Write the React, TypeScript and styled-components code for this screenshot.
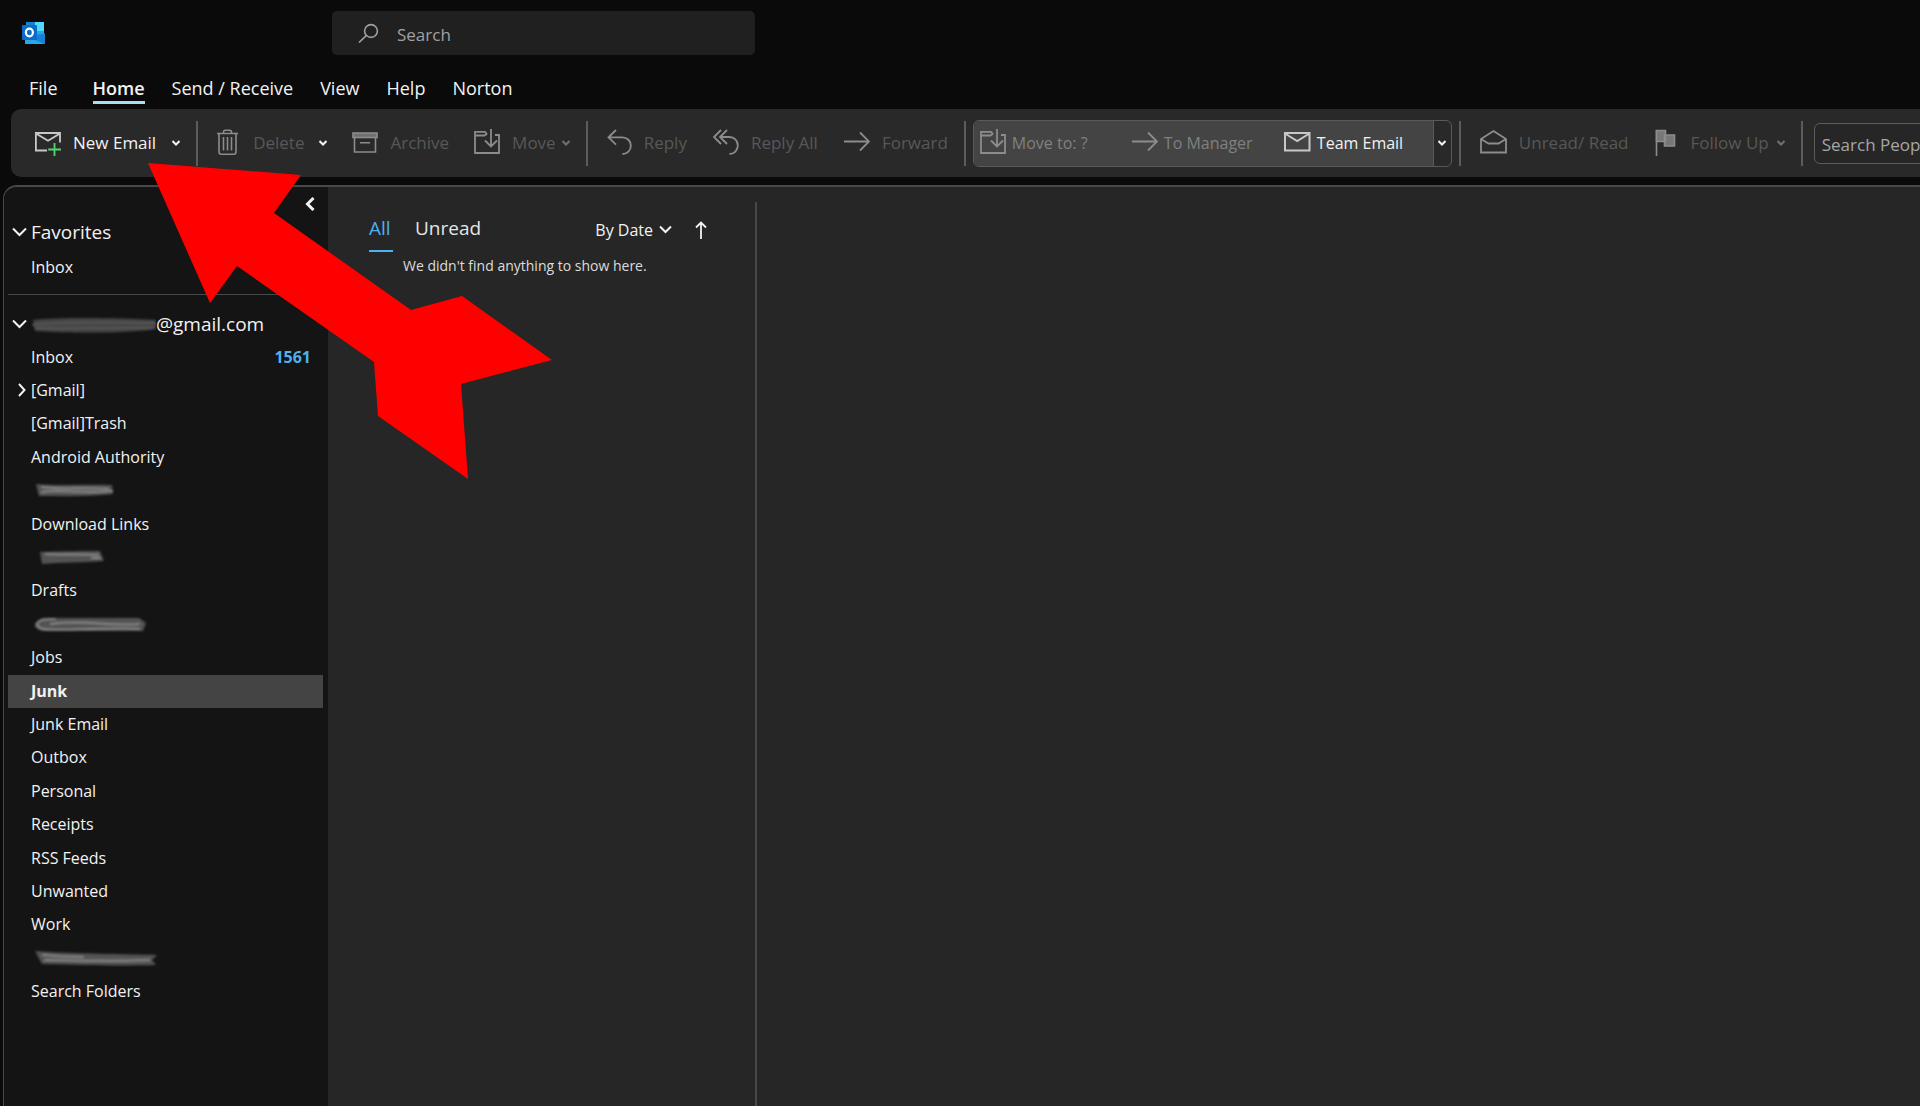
import React from "react";
import styled, { createGlobalStyle } from "styled-components";

const GlobalStyle = createGlobalStyle`
  *, *::before, *::after { box-sizing: border-box; }
  body {
    margin: 0;
    background: #0a0a0a;
    color: #f2f2f2;
    font-family: "Open Sans", "Noto Sans", sans-serif;
    font-size: 16px;
  }
  button, input { font: inherit; color: inherit; }
  button { background: none; border: 0; padding: 0; cursor: pointer; white-space: nowrap; }
  a { color: inherit; text-decoration: none; }
  svg { display: block; flex: none; }
`;

const Page = styled.div`
  position: relative;
  display: flex;
  flex-direction: column;
  min-height: 100vh;
  overflow: hidden;
`;

/* ---------- Title bar ---------- */

const TitleBar = styled.header`
  display: flex;
  align-items: center;
  padding: 11px 22px 0;
`;

const LogoSlot = styled.div`
  flex: 0 0 310px;
`;

const SearchBox = styled.label`
  display: flex;
  align-items: center;
  gap: 18px;
  width: 423px;
  height: 44px;
  padding: 0 26px;
  border-radius: 5px;
  background: #202020;
  color: #a0a0a0;
`;

const SearchInput = styled.input`
  flex: 1;
  min-width: 0;
  padding: 3px 0 0;
  border: 0;
  outline: 0;
  background: none;
  font-size: 17px;
  &::placeholder { color: #a0a0a0; opacity: 1; }
`;

/* ---------- Menu tabs ---------- */

const Tabs = styled.nav`
  display: flex;
  gap: 27px;
  height: 54px;
  padding: 20px 29px 0;
`;

const Tab = styled.button<{ $active?: boolean }>`
  height: 29px;
  padding-top: 1px;
  font-size: 18px;
  line-height: 25px;
  font-weight: ${(p) => (p.$active ? 600 : 400)};
  border-bottom: 3px solid ${(p) => (p.$active ? "#a9dcf5" : "transparent")};
  &:first-child { margin-right: 8px; }
`;

/* ---------- Ribbon ---------- */

const Ribbon = styled.div`
  display: flex;
  align-items: center;
  height: 68px;
  margin-left: 11px;
  padding-left: 5px;
  border-radius: 10px 0 0 10px;
  background: #292929;
`;

const Group = styled.div<{ $gap?: number }>`
  display: flex;
  flex: none;
  align-items: center;
  gap: ${(p) => p.$gap ?? 25}px;
  padding: 0 16px 0 19px;
`;

const Divider = styled.div`
  flex: none;
  width: 2px;
  height: 45px;
  background: #5c5c5c;
`;

const Command = styled.button<{ $enabled?: boolean; $tight?: boolean }>`
  display: flex;
  align-items: center;
  gap: ${(p) => (p.$tight ? 6 : 12)}px;
  font-size: ${(p) => (p.$tight ? 16 : 17)}px;
  line-height: 24px;
  color: ${(p) => (p.$enabled ? "#f2f2f2" : p.$tight ? "#808080" : "#585858")};
  > svg:first-child { color: ${(p) => (p.$enabled ? "#c8c8c8" : "#8c8c8c")}; }
`;

const SplitCommand = styled.div<{ $gap: number }>`
  display: flex;
  align-items: center;
  gap: ${(p) => p.$gap}px;
`;

const MenuToggle = styled.button<{ $muted?: boolean }>`
  display: flex;
  align-items: center;
  height: 24px;
  color: ${(p) => (p.$muted ? "#707070" : "#f2f2f2")};
`;

const QuickSteps = styled.div`
  display: flex;
  flex: none;
  height: 47px;
  margin: 0 7px;
  border: 1px solid #5a5a5a;
  border-radius: 6px;
  background: #292929;
  overflow: hidden;
`;

const QuickList = styled.div`
  display: grid;
  grid-template-columns: 152px 152px 149px;
  padding-left: 6px;
  border-right: 1px solid #5a5a5a;
  background: #444444;
`;

const QuickToggle = styled(MenuToggle)`
  justify-content: center;
  width: 17px;
  height: 100%;
`;

const PeopleInput = styled.input`
  flex: none;
  width: 220px;
  height: 41px;
  margin-left: 11px;
  padding: 2px 7px 0;
  border: 1px solid #5c5c5c;
  border-radius: 6px;
  outline: 0;
  background: #262626;
  font-size: 17px;
  &::placeholder { color: #a6a6a6; opacity: 1; }
`;

/* ---------- Workspace ---------- */

const Workspace = styled.main`
  display: flex;
  flex: 1;
  margin: 8px 0 0 3px;
  border: solid #484848;
  border-width: 2px 0 0 1px;
  border-top-left-radius: 14px;
  background: #262626;
  overflow: hidden;
`;

const Sidebar = styled.aside`
  flex: 0 0 324px;
  padding: 0 5px 0 4px;
  background: #141414;
`;

const CollapseRow = styled.div`
  display: flex;
  justify-content: flex-end;
  align-items: center;
  height: 34px;
  padding-right: 8px;
`;

const Heading = styled.button<{ $height: number }>`
  display: flex;
  align-items: center;
  width: 100%;
  height: ${(p) => p.$height}px;
  padding-bottom: 1px;
  font-size: 19px;
  line-height: 22px;
`;

const CaretSlot = styled.span`
  flex: 0 0 23px;
  display: flex;
  justify-content: center;
  color: #f2f2f2;
`;

const Favorites = styled.ul`
  margin: 8px 0 10px;
  padding: 0;
  list-style: none;
`;

const Rule = styled.hr`
  height: 1px;
  margin: 0 0 13px;
  border: 0;
  background: #484848;
`;

const Folders = styled.ul`
  display: grid;
  grid-auto-rows: 1fr;
  min-height: 668px;
  margin: 0;
  padding: 0;
  list-style: none;
`;

const FolderLink = styled.a<{ $selected?: boolean }>`
  display: flex;
  align-items: center;
  min-height: 33px;
  height: 100%;
  padding-bottom: 2px;
  font-size: 16px;
  line-height: 22px;
  font-weight: ${(p) => (p.$selected ? 700 : 400)};
  background: ${(p) => (p.$selected ? "#444444" : "transparent")};
`;

const Count = styled.span`
  margin-left: auto;
  padding-right: 12px;
  font-weight: 700;
  color: #4fb0f0;
`;

const MessageList = styled.section`
  flex: 0 0 427px;
  padding-top: 24px;
`;

const ListHeader = styled.div`
  display: flex;
  align-items: flex-start;
  padding: 0 48px 0 41px;
`;

const FilterTab = styled.button<{ $active?: boolean }>`
  height: 41px;
  min-width: 24px;
  margin-right: 22px;
  padding-bottom: 5px;
  font-size: 19px;
  line-height: 34px;
  text-align: left;
  color: ${(p) => (p.$active ? "#4fb0f0" : "#e4e4e4")};
  border-bottom: 2px solid ${(p) => (p.$active ? "#4fb0f0" : "transparent")};
`;

const SortButton = styled.button`
  display: flex;
  align-items: center;
  gap: 6px;
  height: 37px;
  margin-left: auto;
  margin-right: 23px;
  font-size: 16px;
`;

const OrderButton = styled.button`
  display: flex;
  align-items: center;
  height: 37px;
`;

const EmptyNote = styled.p`
  margin: 3px 0 0;
  padding-left: 75px;
  font-size: 14px;
  line-height: 22px;
  color: #dcdcdc;
`;

const ReadingPane = styled.section`
  flex: 1;
  margin-top: 15px;
  border-left: 2px solid #484848;
`;

const Pointer = styled.svg`
  position: absolute;
  left: 148px;
  top: 163px;
  pointer-events: none;
`;

/* ---------- Icons ---------- */

const Icon = ({ w, h = 28, sw = 2, children }: { w: number; h?: number; sw?: number; children: React.ReactNode }) => (
  <svg width={w} height={h} viewBox={`0 0 ${w} ${h}`} fill="none" stroke="currentColor" strokeWidth={sw} aria-hidden="true">
    {children}
  </svg>
);

const OutlookLogo = () => (
  <svg width="24" height="24" viewBox="0 0 24 24" aria-hidden="true">
    <rect x="4" y="1" width="18" height="16" rx="1" fill="#28a8ea" />
    <rect x="13" y="1" width="9" height="9" fill="#50d9ff" />
    <rect x="4" y="1" width="9" height="5" fill="#1684cf" />
    <path d="M3 13h20v9a1 1 0 0 1-1 1H4a1 1 0 0 1-1-1z" fill="#1490df" />
    <path d="M23 12v11L12 17z" fill="#1a7fd0" />
    <path d="M3 15l19 8H4a1 1 0 0 1-1-1z" fill="#28a8ea" />
    <rect x="0" y="4" width="15" height="15" rx="1" fill="#0a6cc8" />
    <ellipse cx="7.4" cy="11.5" rx="3.5" ry="3.8" fill="none" stroke="#fff" strokeWidth="2.2" />
  </svg>
);

const SearchIcon = () => (
  <Icon w={21} h={20} sw={1.6}>
    <circle cx="13" cy="8" r="6.4" />
    <path d="M8.2 12.6L1 19.5" />
  </Icon>
);

const NewMailIcon = () => (
  <Icon w={26} sw={1.8}>
    <path d="M12 21.5H0.9V4H25v9.5" />
    <path d="M1 4.5l12 7.3L25 4.5" />
    <path d="M19.5 14v13M13.2 20.5h12.8" stroke="#54d46c" />
  </Icon>
);
const MailIcon = () => (
  <Icon w={27}>
    <path d="M1 4h24.5v17.5H1zM1 4.5L13.2 12l12.3-7.5" />
  </Icon>
);
const TrashIcon = () => (
  <Icon w={24} sw={1.6}>
    <path d="M0 4.5h21M6.5 4V3.2q0-2 2-2h4q2 0 2 2V4M2 4.5V23q0 2.2 2.2 2.2h12.6q2.2 0 2.2-2.2V4.5M6.5 8v13.5M10.5 8v13.5M14.5 8v13.5" />
  </Icon>
);
const ArchiveIcon = () => (
  <Icon w={26} sw={1.6}>
    <rect x="1" y="4" width="24" height="4.5" fill="#6f6f6f" />
    <path d="M2.5 8.5V23H23.5V8.5M8 13.8h10" />
  </Icon>
);
const FolderMoveIcon = () => (
  <Icon w={26} sw={1.8}>
    <path d="M13 5l-2-2.2H1V24h24V6h-4M1 6.5h9.5L13 4.8M17 0v17M11 11.5l6 6 6-6" />
  </Icon>
);
const ReplyIcon = () => (
  <Icon w={25} sw={1.8}>
    <path d="M9 1L1.5 8.3 9 15.6M1.5 8.3H15.5a8.3 8.3 0 0 1 0 16.7" />
  </Icon>
);
const ReplyAllIcon = () => (
  <Icon w={26} sw={1.8}>
    <path d="M8 1L1 8l7 7M14 1L7 8l7 7M7 8H16.5a8.3 8.5 0 0 1 0 17" />
  </Icon>
);
const ForwardIcon = () => (
  <Icon w={26} sw={1.8}>
    <path d="M0 12.5h25M16 3.5l9 9-9 9" />
  </Icon>
);
const OpenMailIcon = () => (
  <Icon w={27} sw={1.8}>
    <path d="M1 10v13.5h25V10L13.5 2zM1 10l7.5 4.5h10L26 10" />
  </Icon>
);
const FlagIcon = () => (
  <Icon w={24} sw={1.6}>
    <path d="M1.5 1v26" />
    <path d="M1.5 1.5h9v11h-9zM9.5 6H19.5v11H9.5z" fill="#777" />
  </Icon>
);
const SmallChevron = () => (
  <Icon w={8} h={6}>
    <path d="M.5 1L4 4.5 7.5 1" />
  </Icon>
);
const WideChevron = () => (
  <Icon w={15} h={10}>
    <path d="M1 1.5l6.500 6.500L14 1.500" />
  </Icon>
);
const RightChevron = () => (
  <Icon w={12} h={14}>
    <path d="M5 1l5.500 6L5 13" />
  </Icon>
);

/* Brush marks that hide private folder names: a soft base and two lighter strokes. */
const smudges: Record<string, { w: number; offset: number; base: string; d: string[] }> = {
  account: { w: 125, offset: 0, base: "M2 7C30 4 90 5 125 7v9C90 21 40 20 4 18z", d: ["M2 12C40 8 90 10 124 10", "M5 15c40 1 80-1 117 0"] },
  a: { w: 82, offset: 3, base: "M2 5c24 2 50 0 76 1l1 9c-24 3-50 2-74 2z", d: ["M8 8c20 3 40 0 66 2", "M8 13c20-3 40 2 70-1"] },
  b: { w: 72, offset: 7, base: "M2 6c24-1 44-1 60-1l4 10c-20 2-44 1-62 3z", d: ["M8 8c20 1 40 0 52 1", "M54 12h8"] },
  c: { w: 116, offset: 2, base: "M10 5h96l7 5-3 8H10c-12-3-10-9 0-13z", d: ["M22 6C2 5 0 13 10 16s60-2 96 0", "M18 11c30-5 60 3 88 0"] },
  d: { w: 126, offset: 2, base: "M2 4c40 3 90 3 122 4l-5 5 4 5c-40 1-70 0-114-1z", d: ["M10 8c20 2 30 2 40 2", "M12 13c30 0 70 2 104 0"] },
};

const Smudge = ({ kind }: { kind: string }) => {
  const s = smudges[kind];
  const faint = kind === "account";
  const filterId = `soften-${kind}`;
  return (
    <svg width={s.w + s.offset} height="22" viewBox={`${-s.offset} 0 ${s.w + s.offset} 22`} role="img" aria-label="Hidden name">
      <filter id={filterId}>
        <feGaussianBlur stdDeviation="1.3" />
      </filter>
      <g fill="none" strokeLinecap="round" filter={`url(#${filterId})`}>
        <path d={s.base} fill={faint ? "#444" : "#525252"} />
        {s.d.map((d) => (
          <path key={d} d={d} stroke={faint ? "#565656" : "#858585"} strokeWidth="2" />
        ))}
      </g>
    </svg>
  );
};

/* ---------- Data ---------- */

type Folder = { name?: string; smudge?: string; count?: number; expandable?: boolean; selected?: boolean };

const folders: Folder[] = [
  { name: "Inbox", count: 1561 },
  { name: "[Gmail]", expandable: true },
  { name: "[Gmail]Trash" },
  { name: "Android Authority" },
  { smudge: "a" },
  { name: "Download Links" },
  { smudge: "b" },
  { name: "Drafts" },
  { smudge: "c" },
  { name: "Jobs" },
  { name: "Junk", selected: true },
  { name: "Junk Email" },
  { name: "Outbox" },
  { name: "Personal" },
  { name: "Receipts" },
  { name: "RSS Feeds" },
  { name: "Unwanted" },
  { name: "Work" },
  { smudge: "d" },
  { name: "Search Folders" },
];

const FolderRow = ({ name, smudge, count, expandable, selected }: Folder) => (
  <li>
    <FolderLink href="#" $selected={selected} aria-current={selected ? "page" : undefined}>
      <CaretSlot>{expandable && <RightChevron />}</CaretSlot>
      {smudge ? <Smudge kind={smudge} /> : name}
      {count && <Count>{count}</Count>}
    </FolderLink>
  </li>
);

const menuTabs = ["File", "Home", "Send / Receive", "View", "Help", "Norton"];

export default function App() {
  return (
    <Page>
      <GlobalStyle />
      <TitleBar>
        <LogoSlot>
          <OutlookLogo />
        </LogoSlot>
        <SearchBox>
          <SearchIcon />
          <SearchInput type="text" placeholder="Search" aria-label="Search" />
        </SearchBox>
      </TitleBar>

      <Tabs>
        {menuTabs.map((t) => (
          <Tab key={t} $active={t === "Home"}>
            {t}
          </Tab>
        ))}
      </Tabs>

      <Ribbon>
        <Group>
          <SplitCommand $gap={16}>
            <Command $enabled>
              <NewMailIcon />
              New Email
            </Command>
            <MenuToggle aria-label="New items">
              <SmallChevron />
            </MenuToggle>
          </SplitCommand>
        </Group>
        <Divider />
        <Group>
          <SplitCommand $gap={15}>
            <Command>
              <TrashIcon />
              Delete
            </Command>
            <MenuToggle aria-label="Delete options">
              <SmallChevron />
            </MenuToggle>
          </SplitCommand>
          <Command>
            <ArchiveIcon />
            Archive
          </Command>
          <SplitCommand $gap={6}>
            <Command>
              <FolderMoveIcon />
              Move
            </Command>
            <MenuToggle $muted aria-label="Move options">
              <SmallChevron />
            </MenuToggle>
          </SplitCommand>
        </Group>
        <Divider />
        <Group $gap={26}>
          <Command>
            <ReplyIcon />
            Reply
          </Command>
          <Command>
            <ReplyAllIcon />
            Reply All
          </Command>
          <Command>
            <ForwardIcon />
            Forward
          </Command>
        </Group>
        <Divider />
        <QuickSteps>
          <QuickList>
            <Command $tight>
              <FolderMoveIcon />
              Move to: ?
            </Command>
            <Command $tight>
              <ForwardIcon />
              To Manager
            </Command>
            <Command $tight $enabled>
              <MailIcon />
              Team Email
            </Command>
          </QuickList>
          <QuickToggle aria-label="More quick steps">
            <SmallChevron />
          </QuickToggle>
        </QuickSteps>
        <Divider />
        <Group $gap={26}>
          <Command>
            <OpenMailIcon />
            Unread/ Read
          </Command>
          <SplitCommand $gap={8}>
            <Command>
              <FlagIcon />
              Follow Up
            </Command>
            <MenuToggle $muted aria-label="Follow up options">
              <SmallChevron />
            </MenuToggle>
          </SplitCommand>
        </Group>
        <Divider />
        <PeopleInput type="text" placeholder="Search People" aria-label="Search People" />
      </Ribbon>

      <Workspace>
        <Sidebar>
          <CollapseRow>
            <button aria-label="Collapse folder pane">
              <Icon w={10} h={14} sw={3}>
                <path d="M8.5 1L2.5 7l6 6" />
              </Icon>
            </button>
          </CollapseRow>
          <Heading $height={22}>
            <CaretSlot>
              <WideChevron />
            </CaretSlot>
            Favorites
          </Heading>
          <Favorites>
            <FolderRow name="Inbox" />
          </Favorites>
          <Rule />
          <Heading $height={33}>
            <CaretSlot>
              <WideChevron />
            </CaretSlot>
            <Smudge kind="account" />
            @gmail.com
          </Heading>
          <Folders>
            {folders.map((f) => (
              <FolderRow key={f.name ?? f.smudge} {...f} />
            ))}
          </Folders>
        </Sidebar>

        <MessageList>
          <ListHeader>
            <FilterTab $active>All</FilterTab>
            <FilterTab>Unread</FilterTab>
            <SortButton>
              By Date
              <Icon w={13} h={9}>
                <path d="M1 1.5L6.5 7 12 1.5" />
              </Icon>
            </SortButton>
            <OrderButton aria-label="Reverse sort order">
              <Icon w={12} h={18} sw={1.8}>
                <path d="M6 18V1.5M1 6.5l5-5 5 5" />
              </Icon>
            </OrderButton>
          </ListHeader>
          <EmptyNote>We didn't find anything to show here.</EmptyNote>
        </MessageList>
        <ReadingPane aria-label="Reading pane" />
      </Workspace>

      <Pointer width="404" height="316" viewBox="0 0 404 316" aria-hidden="true">
        <path d="M0 0L153 12 126 50 263 147 314 133 404 197 313 221 320 316 230 253 226 199 89 103 62 140z" fill="#ff0000" />
      </Pointer>
    </Page>
  );
}
